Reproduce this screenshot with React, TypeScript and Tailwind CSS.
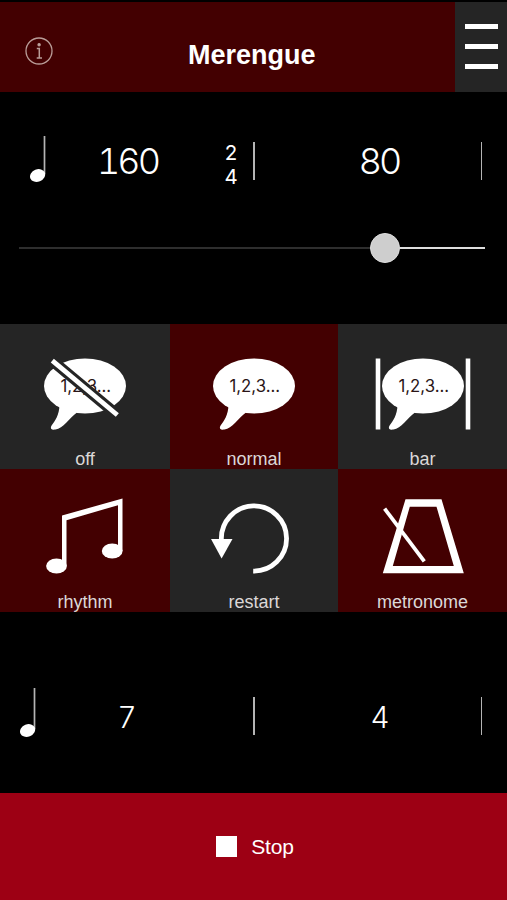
import { useState } from 'react';
import type { ReactNode } from 'react';

const Note = ({ top = 4 }) => {
  return (
    <svg viewBox="0 0 18 52" className="w-[18px] h-[52px] shrink-0 mb-[5px]">
      <path d={`M15.5 ${top}V42`} stroke="#b4b4b4" strokeWidth="1.7" />
      <ellipse cx="8.6" cy="43.5" rx="7.8" ry="6.1" fill="white" transform="rotate(-22 8.6 43.5)" />
    </svg>
  );
};

const Bubble = () => {
  return (
    <>
      <ellipse cx="48" cy="32" rx="41" ry="27.5" fill="white" />
      <path
        d="M22.5 51C22.3 61 18 67 14.3 72C13 74.8 14.5 76.2 18.5 75.6C26 74.5 32.5 64 40 58.5Z"
        fill="white"
      />
      <text x="48.8" y="38.2" textAnchor="middle" fontSize="16.8" fill="#2a1517" className="font-['Inter',sans-serif]">
        1,2,3...
      </text>
    </>
  );
};

const OffIcon = () => {
  return (
    <svg viewBox="0 0 96 86" className="w-24 h-[86px]">
      <Bubble />
      <path d="M15.3 6.7L80.3 61" stroke="#252525" strokeWidth="11" />
      <path d="M15.3 6.7L80.3 61" stroke="white" strokeWidth="4.8" />
    </svg>
  );
};

const NormalIcon = () => {
  return (
    <svg viewBox="0 0 96 86" className="w-24 h-[86px]">
      <Bubble />
    </svg>
  );
};

const BarIcon = () => {
  return (
    <svg viewBox="0 0 96 86" className="w-24 h-[86px]">
      <Bubble />
      <path d="M3 4.5V75.5M93 4.5V75.5" stroke="white" strokeWidth="4.6" />
    </svg>
  );
};

const RhythmIcon = () => {
  return (
    <svg viewBox="0 0 96 89" className="w-24 h-[89px]" fill="white">
      <path d="M25 21.5L85.5 4.5V57H81V11.2L29.5 26.2V72H25Z" />
      <ellipse cx="19.5" cy="72" rx="10.4" ry="7.6" />
      <ellipse cx="75.2" cy="57" rx="10.4" ry="7.6" />
    </svg>
  );
};

const RestartIcon = () => {
  return (
    <svg viewBox="0 0 96 89" className="w-24 h-[89px]">
      <path d="M47.2 77.1A32.6 32.6 0 1 0 15.4 46" fill="none" stroke="white" strokeWidth="4.8" />
      <path d="M5 45H26.5L15.6 64.5Z" fill="white" />
    </svg>
  );
};

const MetronomeIcon = () => {
  return (
    <svg viewBox="0 0 96 89" className="w-24 h-[89px]">
      <path
        d="M30.5 5.3H66.5L88.8 79.3H7.8ZM34.8 12.7L17.8 72H78.8L61.5 12.7Z"
        fill="white"
        fillRule="evenodd"
      />
      <path d="M9.6 14.7L49.3 67.3" stroke="white" strokeWidth="3.8" />
    </svg>
  );
};

type TileProps = { label: string; active: boolean; icon: ReactNode; onClick: () => void };

const Tile = ({ label, active, icon, onClick }: TileProps) => {
  return (
    <button
      onClick={onClick}
      className={`flex flex-col items-center justify-end ${active ? 'bg-[#430001]' : 'bg-[#252525]'}`}>
      {icon}
      <span className="mt-[9px] h-5 text-[18px] leading-5 text-[#dcd8d8]">{label}</span>
    </button>
  );
};

const Divider = () => {
  return <div className="w-[1.5px] h-[38px] shrink-0 bg-[#b4b4b4]" />;
};

export default function App() {
  const [voice, setVoice] = useState('normal');
  const [rhythm, setRhythm] = useState(true);
  const [metronome, setMetronome] = useState(true);

  return (
    <div className="flex flex-col w-[507px] h-[900px] bg-black pt-[2px] text-white font-['Liberation_Sans',Arial,sans-serif]">
      <header className="flex h-[90px]">
        <div className="flex items-center w-[455px] shrink-0 bg-[#430001]">
          <svg viewBox="0 0 28 28" className="w-7 h-7 ml-[24.5px] mt-[7px]" fill="none" stroke="#b99c98" strokeWidth="1.3">
            <circle cx="14" cy="14" r="13" />
            <path d="M11.8 11.5H14.3V20.6M11.7 21H17" strokeWidth="1.5" />
            <circle cx="14.1" cy="7.7" r="1.1" fill="#d8c8c5" />
          </svg>
          <h1 className="w-[127px] ml-[135.5px] text-center text-[27px] leading-8 font-bold mt-[16px]">Merengue</h1>
        </div>
        <button className="flex flex-col items-center gap-[15.5px] w-[52px] bg-[#252525] pt-[22px]">
          <span className="w-[33px] h-[4.5px] bg-white" />
          <span className="w-[33px] h-[4.5px] bg-white" />
          <span className="w-[33px] h-[4.5px] bg-white" />
        </button>
      </header>

      <section className="h-[232px]">
        <div className="flex items-center h-[137px] pl-[29px] pr-[25px] font-['Inter',sans-serif] font-light">
          <Note />
          <span className="w-[161px] text-center text-[36px] tracking-[-3px] tabular-nums">160</span>
          <span className="flex flex-col w-[45px] pl-px items-center text-[20.5px] leading-6 font-normal pt-[9px]">
            <span>2</span>
            <span>4</span>
          </span>
          <Divider />
          <span className="grow text-center pl-6 text-[36px] tracking-[-1.8px]">80</span>
          <Divider />
        </div>
        <div className="flex items-center h-[38px] pl-[19px] pr-[22px]">
          <div className="w-[351px] h-[2.5px] bg-[#2e2e2e]" />
          <div className="w-[30px] h-[30px] rounded-full bg-[#cecece] border border-[#dedede]" />
          <div className="grow h-[2.5px] bg-[#dedede]" />
        </div>
      </section>

      <section className="grid grid-cols-[170px_168px_169px] grid-rows-[144.5px_143.5px] h-[288px]">
        <Tile label="off" active={voice === 'off'} icon={<OffIcon />} onClick={() => setVoice('off')} />
        <Tile label="normal" active={voice === 'normal'} icon={<NormalIcon />} onClick={() => setVoice('normal')} />
        <Tile label="bar" active={voice === 'bar'} icon={<BarIcon />} onClick={() => setVoice('bar')} />
        <Tile label="rhythm" active={rhythm} icon={<RhythmIcon />} onClick={() => setRhythm(!rhythm)} />
        <Tile label="restart" active={false} icon={<RestartIcon />} onClick={() => setVoice('normal')} />
        <Tile label="metronome" active={metronome} icon={<MetronomeIcon />} onClick={() => setMetronome(!metronome)} />
      </section>

      <section className="flex items-center h-[181px] pl-[19px] pr-[25px] pt-[26px] font-['Inter',sans-serif] font-light text-[29.5px]">
        <Note top={1} />
        <span className="w-[216px] pr-[36px] pt-[3px] text-center">7</span>
        <Divider />
        <span className="grow pl-[25px] pt-[3px] text-center">4</span>
        <Divider />
      </section>

      <button className="flex items-center justify-center gap-[14px] grow bg-[#9d0014] pl-[3px] text-[21px]">
        <span className="w-[21px] h-[21px] bg-white" />
        <span className="pt-px tracking-[-0.2px]">Stop</span>
      </button>
    </div>
  );
}
